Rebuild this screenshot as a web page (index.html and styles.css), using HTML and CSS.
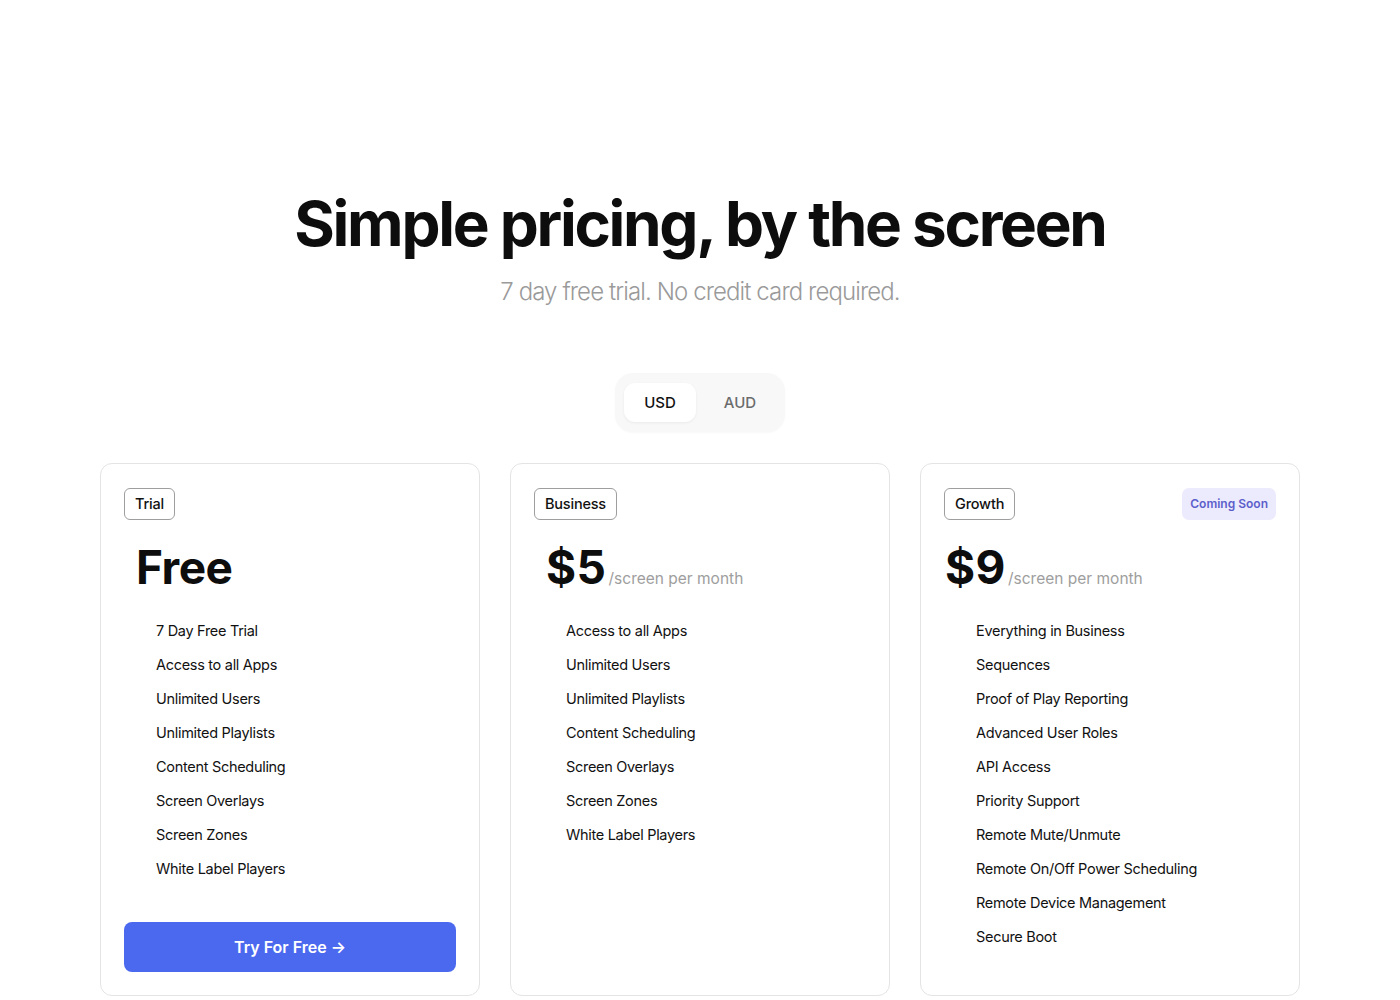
FILE: index.html
```html
<!DOCTYPE html>
<html lang="en">
<head>
<meta charset="utf-8">
<title>Pricing</title>
<link rel="stylesheet" href="styles.css">
</head>
<body>
<main class="page">
  <header class="hero">
    <h1 class="title">Simple pricing, by the screen</h1>
    <p class="subtitle">7 day free trial. No credit card required.</p>
  </header>

  <div class="toggle-wrap">
    <div class="toggle">
      <button class="toggle-btn active">USD</button>
      <button class="toggle-btn">AUD</button>
    </div>
  </div>

  <section class="cards">
    <article class="card">
      <div class="card-top">
        <span class="tag">Trial</span>
      </div>
      <div class="price price-free">
        <span class="amount">Free</span>
      </div>
      <ul class="features">
        <li>7 Day Free Trial</li>
        <li>Access to all Apps</li>
        <li>Unlimited Users</li>
        <li>Unlimited Playlists</li>
        <li>Content Scheduling</li>
        <li>Screen Overlays</li>
        <li>Screen Zones</li>
        <li>White Label Players</li>
      </ul>
      <button class="cta">Try For Free →</button>
    </article>

    <article class="card">
      <div class="card-top">
        <span class="tag">Business</span>
      </div>
      <div class="price price-business">
        <span class="amount">$5</span><span class="per">/screen per month</span>
      </div>
      <ul class="features">
        <li>Access to all Apps</li>
        <li>Unlimited Users</li>
        <li>Unlimited Playlists</li>
        <li>Content Scheduling</li>
        <li>Screen Overlays</li>
        <li>Screen Zones</li>
        <li>White Label Players</li>
      </ul>
    </article>

    <article class="card">
      <div class="card-top">
        <span class="tag">Growth</span>
        <span class="soon">Coming Soon</span>
      </div>
      <div class="price price-growth">
        <span class="amount">$9</span><span class="per">/screen per month</span>
      </div>
      <ul class="features">
        <li>Everything in Business</li>
        <li>Sequences</li>
        <li>Proof of Play Reporting</li>
        <li>Advanced User Roles</li>
        <li>API Access</li>
        <li>Priority Support</li>
        <li>Remote Mute/Unmute</li>
        <li>Remote On/Off Power Scheduling</li>
        <li>Remote Device Management</li>
        <li>Secure Boot</li>
      </ul>
    </article>
  </section>
</main>
</body>
</html>
```

FILE: styles.css
```css
* { box-sizing: border-box; }

html, body {
  margin: 0;
  padding: 0;
  background: #ffffff;
}

body {
  font-family: Inter, "Noto Sans", sans-serif;
  color: #111111;
}

.page {
  width: 1200px;
  margin: 0 auto;
  padding-top: 186px;
}

.hero {
  text-align: center;
}

.title {
  margin: 0;
  font-family: Inter, sans-serif;
  font-size: 62px;
  line-height: 76px;
  font-weight: 700;
  letter-spacing: -2.3px;
  color: #0d0d0d;
}

.subtitle {
  margin: 14px 0 0;
  font-size: 24px;
  line-height: 32px;
  font-weight: 300;
  letter-spacing: -0.9px;
  color: #9a9a9a;
}

.toggle-wrap {
  display: flex;
  justify-content: center;
  margin-top: 65px;
}

.toggle {
  display: flex;
  gap: 8px;
  padding: 10px 9px;
  background: #f8f8f8;
  border-radius: 18px;
  box-shadow: 0 1px 2px rgba(0,0,0,0.03);
}

.toggle-btn {
  font-family: Inter, sans-serif;
  font-size: 15px;
  font-weight: 500;
  border: none;
  background: transparent;
  color: #6b6b6b;
  width: 72px;
  height: 39px;
  border-radius: 11px;
  padding: 0;
}

.toggle-btn.active {
  background: #ffffff;
  color: #111111;
  box-shadow: 0 1px 3px rgba(0,0,0,0.06);
}

.cards {
  display: grid;
  grid-template-columns: repeat(3, 380px);
  gap: 30px;
  margin-top: 31px;
  align-items: stretch;
}

.card {
  border: 1px solid #e4e4e4;
  border-radius: 12px;
  padding: 24px 23px 23px;
  display: flex;
  flex-direction: column;
  min-height: 533px;
}

.card-top {
  display: flex;
  justify-content: space-between;
  align-items: center;
}

.tag {
  display: inline-block;
  border: 1px solid #9e9e9e;
  border-radius: 6px;
  padding: 0 10px;
  height: 32px;
  line-height: 30px;
  font-size: 14.5px;
  font-weight: 500;
  letter-spacing: -0.2px;
  color: #111;
}

.soon {
  display: inline-block;
  background: #eceafd;
  color: #5c5fcb;
  border-radius: 7px;
  height: 32px;
  line-height: 32px;
  padding: 0 8px;
  font-size: 12px;
  font-weight: 600;
}

.price {
  display: flex;
  align-items: baseline;
  margin-top: 19px;
  height: 56px;
}

.price-free { padding-left: 12px; }
.price-business { padding-left: 12px; }
.price-growth { padding-left: 1px; }

.amount {
  font-size: 46px;
  line-height: 56px;
  font-weight: 700;
  letter-spacing: -0.5px;
  color: #0d0d0d;
}

.price-business .amount,
.price-growth .amount {
  letter-spacing: 0.5px;
}

.per {
  margin-left: 2px;
  font-size: 15.5px;
  font-weight: 400;
  color: #9e9e9e;
}

.features {
  list-style: none;
  margin: 26px 0 0;
  padding: 0 0 0 32px;
}

.features li {
  font-size: 14.5px;
  line-height: 20px;
  margin-bottom: 14px;
  letter-spacing: -0.3px;
  color: #111;
}

.cta {
  margin-top: auto;
  width: 100%;
  height: 50px;
  border: none;
  border-radius: 8px;
  background: #4b69ef;
  color: #ffffff;
  font-family: Inter, sans-serif;
  font-size: 16px;
  font-weight: 600;
}
```
